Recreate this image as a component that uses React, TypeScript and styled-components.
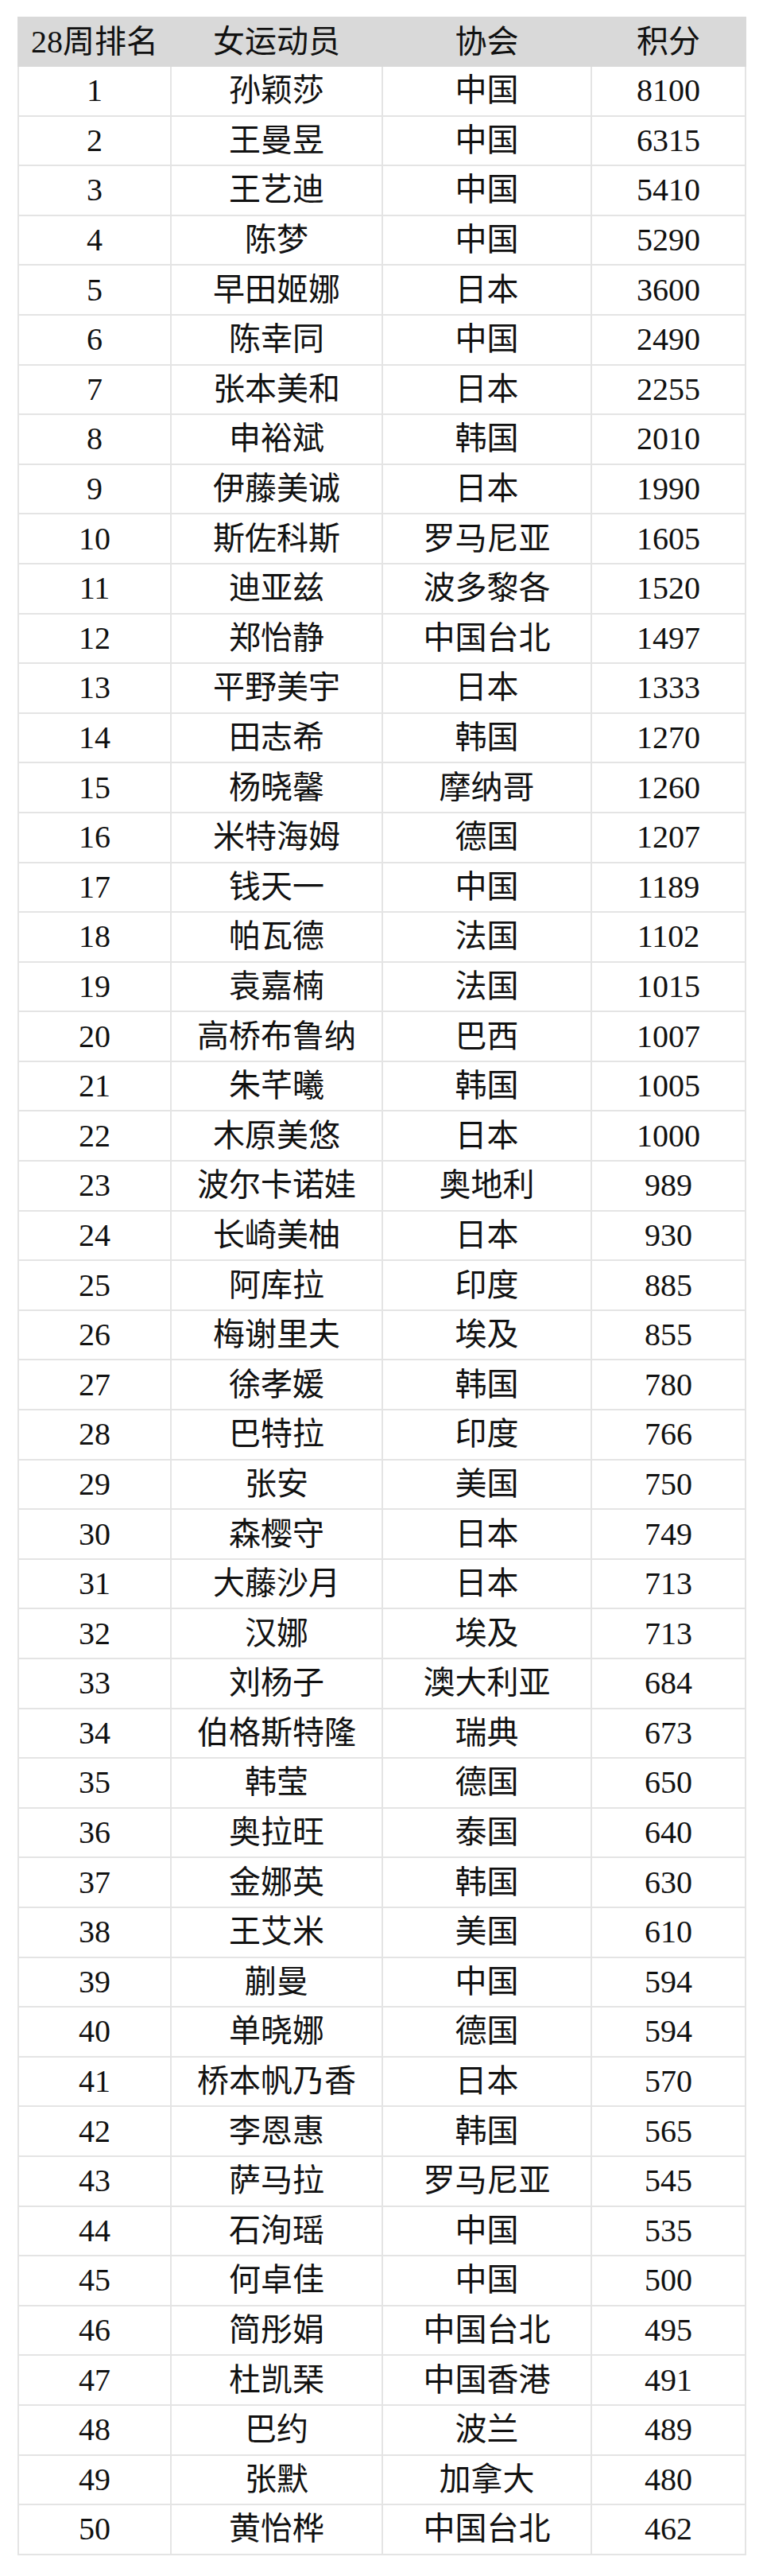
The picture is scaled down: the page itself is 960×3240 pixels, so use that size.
import styled, { createGlobalStyle } from "styled-components";

const GlobalStyle = createGlobalStyle`
  html, body {
    margin: 0;
    padding: 0;
    background: #ffffff;
  }
`;

const rows: [string, string, string][] = [
  ["孙颖莎", "中国", "8100"],
  ["王曼昱", "中国", "6315"],
  ["王艺迪", "中国", "5410"],
  ["陈梦", "中国", "5290"],
  ["早田姬娜", "日本", "3600"],
  ["陈幸同", "中国", "2490"],
  ["张本美和", "日本", "2255"],
  ["申裕斌", "韩国", "2010"],
  ["伊藤美诚", "日本", "1990"],
  ["斯佐科斯", "罗马尼亚", "1605"],
  ["迪亚兹", "波多黎各", "1520"],
  ["郑怡静", "中国台北", "1497"],
  ["平野美宇", "日本", "1333"],
  ["田志希", "韩国", "1270"],
  ["杨晓馨", "摩纳哥", "1260"],
  ["米特海姆", "德国", "1207"],
  ["钱天一", "中国", "1189"],
  ["帕瓦德", "法国", "1102"],
  ["袁嘉楠", "法国", "1015"],
  ["高桥布鲁纳", "巴西", "1007"],
  ["朱芊曦", "韩国", "1005"],
  ["木原美悠", "日本", "1000"],
  ["波尔卡诺娃", "奥地利", "989"],
  ["长崎美柚", "日本", "930"],
  ["阿库拉", "印度", "885"],
  ["梅谢里夫", "埃及", "855"],
  ["徐孝媛", "韩国", "780"],
  ["巴特拉", "印度", "766"],
  ["张安", "美国", "750"],
  ["森樱守", "日本", "749"],
  ["大藤沙月", "日本", "713"],
  ["汉娜", "埃及", "713"],
  ["刘杨子", "澳大利亚", "684"],
  ["伯格斯特隆", "瑞典", "673"],
  ["韩莹", "德国", "650"],
  ["奥拉旺", "泰国", "640"],
  ["金娜英", "韩国", "630"],
  ["王艾米", "美国", "610"],
  ["蒯曼", "中国", "594"],
  ["单晓娜", "德国", "594"],
  ["桥本帆乃香", "日本", "570"],
  ["李恩惠", "韩国", "565"],
  ["萨马拉", "罗马尼亚", "545"],
  ["石洵瑶", "中国", "535"],
  ["何卓佳", "中国", "500"],
  ["简彤娟", "中国台北", "495"],
  ["杜凯琹", "中国香港", "491"],
  ["巴约", "波兰", "489"],
  ["张默", "加拿大", "480"],
  ["黄怡桦", "中国台北", "462"],
];

const App = () => {
  return (
    <>
      <GlobalStyle />
      <Page>
        <Table>
          <colgroup>
            <col style={{ width: 192 }} />
            <col style={{ width: 266 }} />
            <col style={{ width: 263 }} />
            <col style={{ width: 194 }} />
          </colgroup>
          <thead>
            <tr>
              <HeadCell>28周排名</HeadCell>
              <HeadCell>女运动员</HeadCell>
              <HeadCell>协会</HeadCell>
              <HeadCell>积分</HeadCell>
            </tr>
          </thead>
          <tbody>
            {rows.map(([name, assoc, points], i) => (
              <tr key={i}>
                <Cell>{i + 1}</Cell>
                <Cell>{name}</Cell>
                <Cell>{assoc}</Cell>
                <Cell>{points}</Cell>
              </tr>
            ))}
          </tbody>
        </Table>
      </Page>
    </>
  );
};

export default App;

const Page = styled.div`
  width: 960px;
  padding: 21px 0 0 22px;
  box-sizing: border-box;
`;

const Table = styled.table`
  width: 916px;
  border-collapse: collapse;
  table-layout: fixed;
  font-family: "Liberation Serif", "Noto Sans CJK SC", serif;
  font-size: 40px;
  color: #111111;
`;

const HeadCell = styled.th`
  height: 59px;
  padding: 0;
  background: #d9d9d9;
  font-weight: normal;
  text-align: center;
  vertical-align: middle;
  border: 2px solid #d9d9d9;
  line-height: 1;
`;

const Cell = styled.td`
  height: 60.6px;
  padding: 0;
  text-align: center;
  vertical-align: middle;
  border: 2px solid #e4e4e4;
  line-height: 1;
`;
